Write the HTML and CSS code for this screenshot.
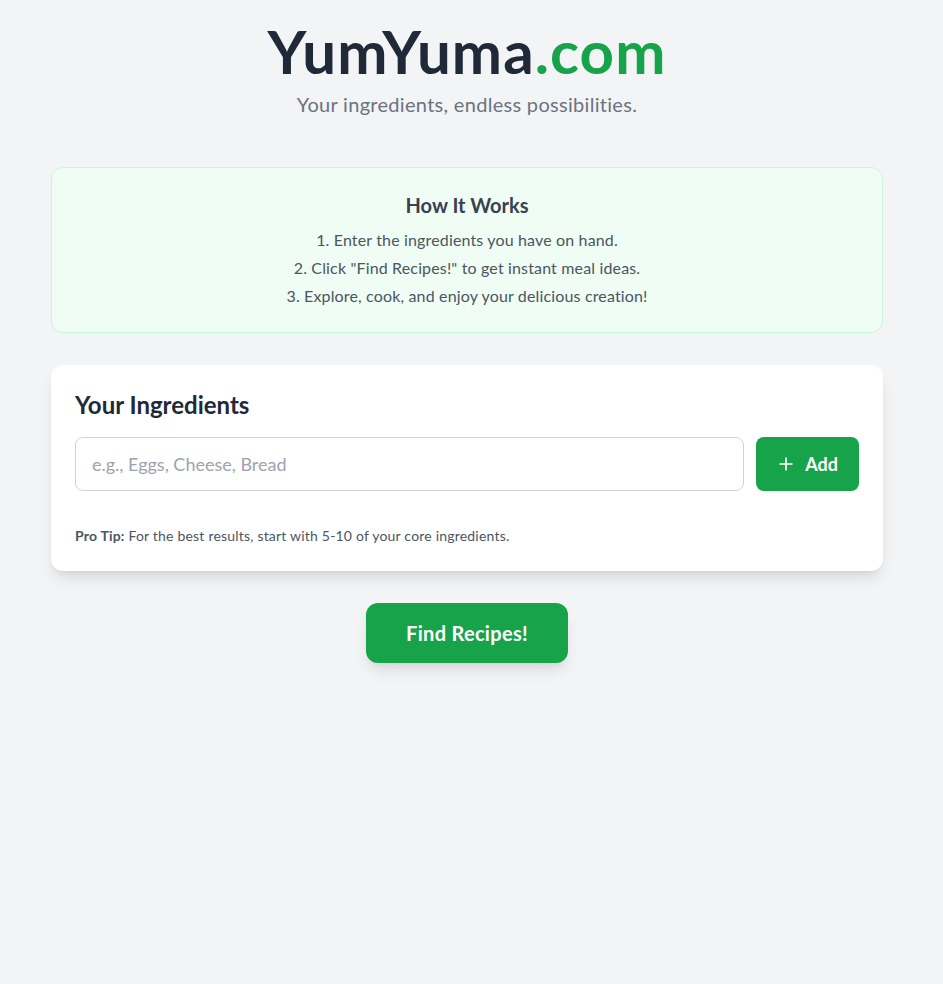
FILE: index.html
```html
<!DOCTYPE html>
<html lang="en">
<head>
<meta charset="utf-8">
<title>YumYuma.com</title>
<link rel="stylesheet" href="styles.css">
</head>
<body>
<main class="page">
  <header class="hero">
    <h1 class="logo">YumYuma<span class="logo-tld">.com</span></h1>
    <p class="tagline">Your ingredients, endless possibilities.</p>
  </header>

  <section class="how">
    <h2 class="how-title">How It Works</h2>
    <ol class="how-list">
      <li>1. Enter the ingredients you have on hand.</li>
      <li>2. Click "Find Recipes!" to get instant meal ideas.</li>
      <li>3. Explore, cook, and enjoy your delicious creation!</li>
    </ol>
  </section>

  <section class="card">
    <h2 class="card-title">Your Ingredients</h2>
    <div class="entry">
      <input class="entry-input" type="text" placeholder="e.g., Eggs, Cheese, Bread">
      <button class="add-btn" type="button">
        <svg class="add-icon" viewBox="0 0 24 24" width="18" height="18" aria-hidden="true"><path d="M12 4v16M4 12h16" fill="none" stroke="currentColor" stroke-width="2.2" stroke-linecap="round"/></svg>
        <span>Add</span>
      </button>
    </div>
    <p class="tip"><strong>Pro Tip:</strong> For the best results, start with 5-10 of your core ingredients.</p>
  </section>

  <div class="actions">
    <button class="find-btn" type="button">Find Recipes!</button>
  </div>
</main>
</body>
</html>
```

FILE: styles.css
```css
* { box-sizing: border-box; }

html, body {
  margin: 0;
  padding: 0;
}

body {
  background: #f3f4f6;
  font-family: Lato, "Noto Sans", "Liberation Sans", sans-serif;
  color: #1f2937;
  padding-right: 9px;
}

.page {
  max-width: 896px;
  margin: 0 auto;
  padding: 17px 32px 40px;
}

.hero {
  text-align: center;
  margin-bottom: 49px;
}

.logo {
  margin: 0;
  font-size: 60px;
  line-height: 68px;
  font-weight: 700;
  color: #1f2937;
  letter-spacing: 1.1px;
}

.logo-tld {
  color: #16a34a;
}

.tagline {
  margin: 5px 0 0;
  font-size: 20px;
  line-height: 28px;
  color: #6b7280;
  letter-spacing: 0.3px;
}

.how {
  background: #f0fdf4;
  border: 1px solid #c6f6de;
  border-radius: 12px;
  padding: 23px 24px 22px;
  text-align: center;
  margin-bottom: 32px;
}

.how-title {
  margin: 0 0 7px;
  font-size: 20px;
  line-height: 28px;
  font-weight: 700;
  color: #374151;
}

.how-list {
  list-style: none;
  margin: 0;
  padding: 0;
  font-size: 16px;
  line-height: 28px;
  color: #4b5563;
  letter-spacing: 0.15px;
}

.card {
  background: #fff;
  border-radius: 12px;
  padding: 24px 24px 25px;
  box-shadow: 0 10px 15px -3px rgba(0,0,0,0.1), 0 4px 6px -4px rgba(0,0,0,0.1);
  margin-bottom: 32px;
}

.card-title {
  margin: 0 0 16px;
  font-size: 24px;
  line-height: 32px;
  font-weight: 700;
  color: #1f2937;
}

.entry {
  display: flex;
  gap: 12px;
}

.entry-input {
  flex: 1;
  height: 54px;
  border: 1px solid #d1d5db;
  border-radius: 8px;
  padding: 0 16px;
  font-family: inherit;
  font-size: 18px;
  color: #1f2937;
  background: #fff;
  outline: none;
}

.entry-input::placeholder {
  color: #9ca3af;
}

.add-btn {
  display: flex;
  align-items: center;
  gap: 10px;
  height: 54px;
  width: 103px;
  justify-content: center;
  border: 0;
  border-radius: 8px;
  background: #16a34a;
  color: #fff;
  font-family: inherit;
  font-size: 18px;
  font-weight: 700;
}

.add-icon {
  display: block;
}

.tip {
  margin: 35px 0 0;
  font-size: 14px;
  line-height: 20px;
  color: #4b5563;
  letter-spacing: 0.2px;
}

.tip strong {
  font-weight: 700;
}

.actions {
  display: flex;
  justify-content: center;
}

.find-btn {
  width: 202px;
  height: 60px;
  border: 0;
  border-radius: 12px;
  background: #16a34a;
  color: #fff;
  font-family: inherit;
  font-size: 20px;
  font-weight: 700;
  letter-spacing: 0.3px;
  box-shadow: 0 10px 15px -3px rgba(0,0,0,0.1), 0 4px 6px -4px rgba(0,0,0,0.1);
}
```
